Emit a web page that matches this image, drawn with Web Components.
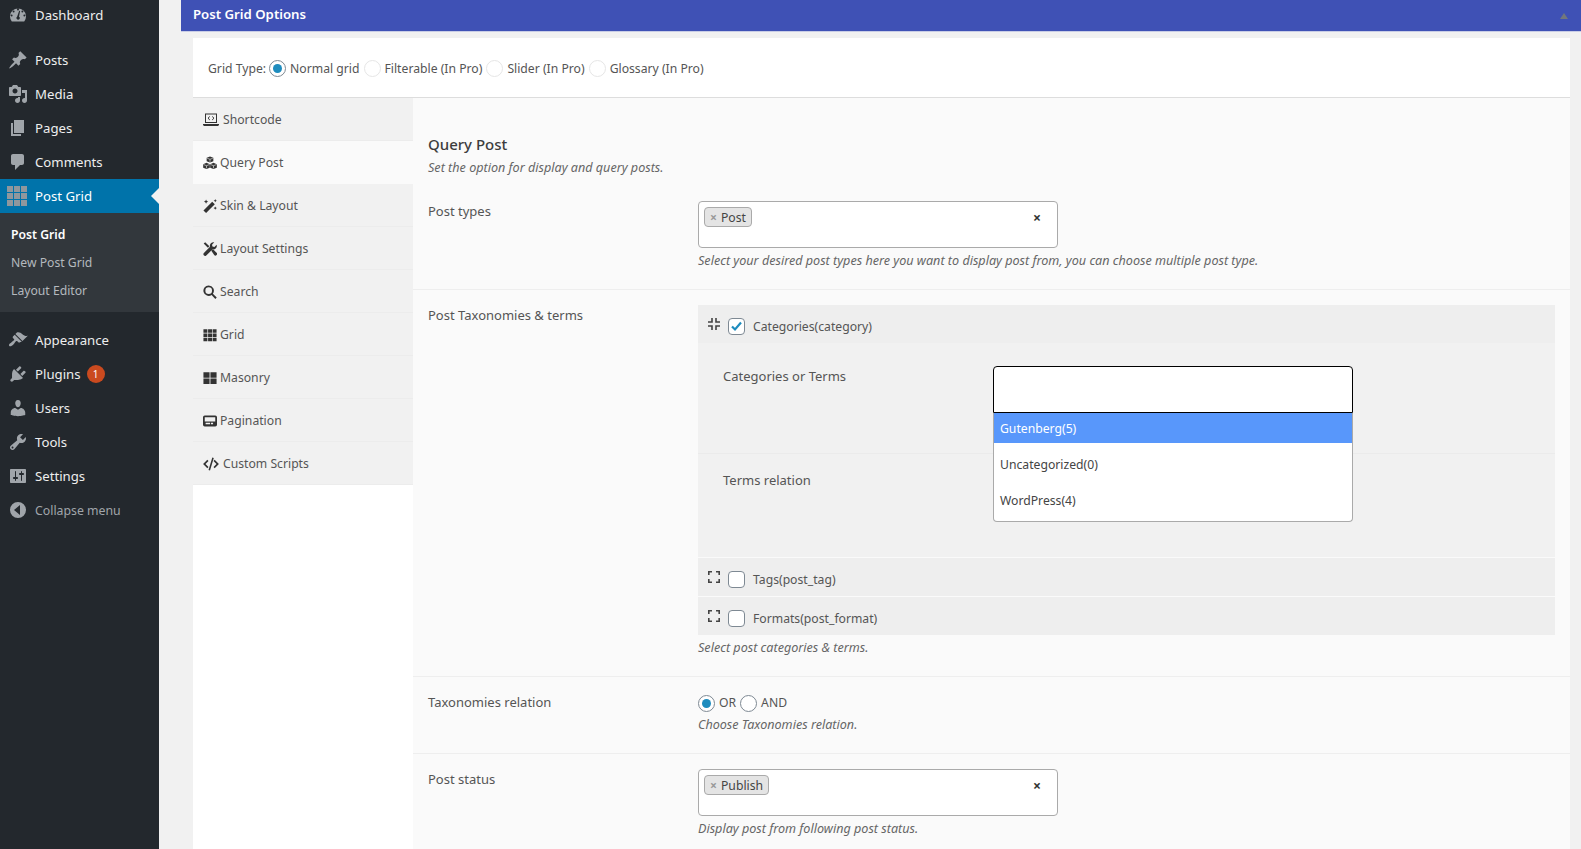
<!DOCTYPE html>
<html>
<head>
<meta charset="utf-8">
<title>Post Grid Options</title>
<style>
  html, body { margin: 0; height: 100%; overflow: hidden; background: #f1f1f1; }
  body { display: flex; font: 13px/20px "Noto Sans", "Open Sans", sans-serif; color: #444; }
</style>
</head>
<body>
<wp-sidebar>
  <wp-menu-item icon="dashboard" style="height:30px">Dashboard</wp-menu-item>
  <wp-menu-item icon="post" style="margin-top:13px">Posts</wp-menu-item>
  <wp-menu-item icon="media">Media</wp-menu-item>
  <wp-menu-item icon="pages">Pages</wp-menu-item>
  <wp-menu-item icon="comments">Comments</wp-menu-item>
  <wp-menu-item icon="grid" current>Post Grid</wp-menu-item>
  <wp-submenu>
    <wp-sub-item active>Post Grid</wp-sub-item>
    <wp-sub-item>New Post Grid</wp-sub-item>
    <wp-sub-item>Layout Editor</wp-sub-item>
  </wp-submenu>
  <wp-menu-item icon="appearance" style="margin-top:11px">Appearance</wp-menu-item>
  <wp-menu-item icon="plugins" badge="1">Plugins</wp-menu-item>
  <wp-menu-item icon="users">Users</wp-menu-item>
  <wp-menu-item icon="tools">Tools</wp-menu-item>
  <wp-menu-item icon="settings">Settings</wp-menu-item>
  <wp-menu-item icon="collapse" dim>Collapse menu</wp-menu-item>
</wp-sidebar>

<pg-metabox title="Post Grid Options">
  <pg-grid-type slot="top">
    <span>Grid Type:</span>
    <pg-radio checked>Normal grid</pg-radio>
    <pg-radio disabled>Filterable (In Pro)</pg-radio>
    <pg-radio disabled>Slider (In Pro)</pg-radio>
    <pg-radio disabled>Glossary (In Pro)</pg-radio>
  </pg-grid-type>

  <pg-tab slot="tabs" icon="laptop">Shortcode</pg-tab>
  <pg-tab slot="tabs" icon="cubes" active>Query Post</pg-tab>
  <pg-tab slot="tabs" icon="magic">Skin &amp; Layout</pg-tab>
  <pg-tab slot="tabs" icon="wrench">Layout Settings</pg-tab>
  <pg-tab slot="tabs" icon="search">Search</pg-tab>
  <pg-tab slot="tabs" icon="th">Grid</pg-tab>
  <pg-tab slot="tabs" icon="large">Masonry</pg-tab>
  <pg-tab slot="tabs" icon="card">Pagination</pg-tab>
  <pg-tab slot="tabs" icon="code">Custom Scripts</pg-tab>

  <pg-section-title hint="Set the option for display and query posts.">Query Post</pg-section-title>

  <pg-field label="Post types" hint="Select your desired post types here you want to display post from, you can choose multiple post type.">
    <pg-tags tag="Post"></pg-tags>
  </pg-field>

  <pg-field label="Post Taxonomies &amp; terms" hint="Select post categories &amp; terms.">
    <pg-term label="Categories(category)" open>
      <pg-subrow label="Categories or Terms" style="height:111px">
        <pg-dropdown>
          <pg-option selected>Gutenberg(5)</pg-option>
          <pg-option>Uncategorized(0)</pg-option>
          <pg-option>WordPress(4)</pg-option>
        </pg-dropdown>
      </pg-subrow>
      <pg-subrow label="Terms relation" style="height:103px"></pg-subrow>
    </pg-term>
    <pg-term label="Tags(post_tag)"></pg-term>
    <pg-term label="Formats(post_format)"></pg-term>
  </pg-field>

  <pg-field label="Taxonomies relation" hint="Choose Taxonomies relation.">
    <div style="display:flex;height:20px;box-sizing:border-box;padding-top:2px;align-items:center">
      <pg-radio checked>OR</pg-radio>
      <pg-radio>AND</pg-radio>
    </div>
  </pg-field>

  <pg-field label="Post status" hint="Display post from following post status.">
    <pg-tags tag="Publish"></pg-tags>
  </pg-field>
</pg-metabox>

<script>
// dashicons-style paths for the admin menu, 20x20
const MENU_ICONS = {
  dashboard: '<path fill-rule="evenodd" d="M3.800 16.500h12.400A8 8 0 1 0 3.800 16.500zM10 3.600a1 1 0 1 1 0 2 1 1 0 0 1 0-2zM5.600 5.400a1 1 0 1 1 0 2 1 1 0 0 1 0-2zM14.400 5.400a1 1 0 1 1 0 2 1 1 0 0 1 0-2zM3.600 9.600a1 1 0 1 1 0 2 1 1 0 0 1 0-2zM16.400 9.600a1 1 0 1 1 0 2 1 1 0 0 1 0-2zM11.200 5.800l.9.3-1.100 5.600a1.600 1.600 0 0 1-.9 3 1.600 1.600 0 0 1-1-2.900z"/>',
  post: '<path d="M10.44 3.02l1.82-1.82 6.36 6.35-1.83 1.82c-1.05-.68-2.48-.57-3.41.36l-.75.75c-.92.93-1.04 2.35-.35 3.41l-1.83 1.82-2.41-2.41-2.8 2.79c-.42.42-3.38 2.71-3.8 2.29s1.86-3.39 2.28-3.81l2.79-2.79L4.1 9.36l1.83-1.82c1.05.69 2.48.57 3.4-.36l.75-.75c.93-.92 1.05-2.35.36-3.41z"/>',
  media: '<path d="M13 11V4c0-.55-.45-1-1-1h-1.67L9 1H5L3.67 3H2c-.55 0-1 .45-1 1v7c0 .55.45 1 1 1h10c.55 0 1-.45 1-1zM7 4.5c1.38 0 2.5 1.12 2.5 2.5S8.38 9.5 7 9.5 4.5 8.38 4.5 7 5.62 4.5 7 4.5zM14 6h5v10.5c0 1.38-1.12 2.5-2.5 2.5S14 17.88 14 16.5s1.12-2.5 2.5-2.5c.17 0 .34.02.5.05V9h-3V6zm-4 8.05V13h2v3.5c0 1.38-1.12 2.5-2.5 2.5S7 17.88 7 16.5 8.12 14 9.5 14c.17 0 .34.02.5.05z"/>',
  pages: '<path d="M6 15V2h10v13H6zm-1 1h8v2H3V5h2v11z"/>',
  comments: '<path d="M5 2h9c1.1 0 2 .9 2 2v7c0 1.1-.9 2-2 2h-2l-5 5v-5H5c-1.1 0-2-.9-2-2V4c0-1.1.9-2 2-2z"/>',
  grid: '<path d="M0 0h6v6H0zM7 0h6v6H7zM14 0h6v6h-6zM0 7h6v6H0zM7 7h6v6H7zM14 7h6v6h-6zM0 14h6v6H0zM7 14h6v6H7zM14 14h6v6h-6z"/>',
  appearance: '<path d="M14.48 11.06L7.41 3.99l1.5-1.5c.5-.56 2.3-.47 3.51.32 1.21.8 1.43 1.28 2.91 2.1 1.18.64 2.45 1.26 4.45.85zm-.71.71L6.7 4.7 4.93 6.47c-.39.39-.39 1.02 0 1.41l1.06 1.06c.39.39.39 1.03 0 1.42-.6.6-1.43 1.11-2.21 1.69-.35.26-.7.53-1.01.84C1.43 13.23.4 15.09 1.3 16s2.74-.13 4.08-1.47c.31-.31.58-.66.84-1.01.58-.78 1.09-1.61 1.69-2.21.39-.39 1.02-.39 1.41 0l1.06 1.06c.39.39 1.02.39 1.41 0z"/>',
  plugins: '<path d="M13.11 4.36L9.87 7.6 8 5.73l3.24-3.24c.35-.34 1.05-.2 1.56.32.52.51.66 1.21.31 1.55zm-8 1.77l.91-1.12 9.01 9.01-1.19.84c-.71.71-2.63 1.16-3.82 1.16H6.14L4.9 17.26c-.59.59-1.54.59-2.12 0-.59-.58-.59-1.53 0-2.12l1.24-1.24v-3.88c0-1.13.4-3.19 1.09-3.89zm7.26 3.97l3.24-3.24c.34-.35 1.04-.21 1.55.31.52.51.66 1.21.31 1.55l-3.24 3.25z"/>',
  users: '<path d="M10 9.25c-2.27 0-2.73-3.44-2.73-3.44C7 4.02 7.82 2 9.97 2c2.16 0 2.98 2.02 2.71 3.81 0 0-.41 3.44-2.68 3.44zm0 2.57L12.72 10c2.39 0 4.52 2.33 4.52 4.53v2.49s-3.65 1.13-7.24 1.13c-3.65 0-7.24-1.13-7.24-1.13v-2.49c0-2.25 1.94-4.48 4.47-4.48z"/>',
  tools: '<path d="M16.68 9.77c-1.34 1.34-3.3 1.67-4.95.99l-5.41 6.52c-.99.99-2.59.99-3.58 0s-.99-2.59 0-3.57l6.52-5.42c-.68-1.65-.35-3.61.99-4.95 1.28-1.28 3.12-1.62 4.72-1.06l-2.89 2.89 2.82 2.82 2.86-2.87c.53 1.58.18 3.39-1.08 4.65zM3.81 16.21c.4.39 1.04.39 1.43 0 .4-.4.4-1.04 0-1.43-.39-.4-1.03-.4-1.43 0-.39.39-.39 1.03 0 1.43z"/>',
  settings: '<path d="M18 16V4c0-.55-.45-1-1-1H3c-.55 0-1 .45-1 1v12c0 .55.45 1 1 1h14c.55 0 1-.45 1-1zM8 11h1c.55 0 1 .45 1 1s-.45 1-1 1H8v1.5c0 .28-.22.5-.5.5s-.5-.22-.5-.5V13H6c-.55 0-1-.45-1-1s.45-1 1-1h1V5.5c0-.28.22-.5.5-.5s.5.22.5.5V11zm5-2h-1c-.55 0-1-.45-1-1s.45-1 1-1h1V5.5c0-.28.22-.5.5-.5s.5.22.5.5V7h1c.55 0 1 .45 1 1s-.45 1-1 1h-1v5.5c0 .28-.22.5-.5.5s-.5-.22-.5-.5V9z"/>',
  collapse: '<path fill-rule="evenodd" d="M18 10a8 8 0 1 0-16 0 8 8 0 0 0 16 0zm-6-5v10l-6-5z"/>'
};

// font-awesome-like tab icons, 16x16
const TAB_ICONS = {
  laptop: '<path fill-rule="evenodd" d="M2 1.500h12v9.500H2zM3 2.500V10h10V2.500zM0 12h16v1l-1 1H1l-1-1z"/><path d="M6.800 4.500L5 6.200l1.800 1.700M9.200 4.500L11 6.200 9.200 7.900" fill="none" stroke="#333"/>',
  cubes: '<path d="M8 .5l3.800 1.500v4L8 7.500 4.200 6V2zM4 7.800l3.800 1.500v4L4 14.800.2 13.300v-4zM12 7.800l3.800 1.500v4L12 14.800l-3.800-1.500v-4z"/><path d="M4.700 2.500L8 3.800l3.300-1.300M8 3.800v3M.7 9.800L4 11.100l3.300-1.300M4 11.100v3M8.700 9.800l3.300 1.300 3.300-1.300M12 11.100v3" fill="none" stroke="#f1f1f1" stroke-width=".7"/>',
  magic: '<path d="M.5 13L10.500 3l3 3L3.500 16zM3.500 .5l.8 1.700 1.700.8-1.700.8-.8 1.700-.8-1.700L1 3l1.700-.8zM14 8.500l.6 1.300 1.300.6-1.300.6-.6 1.300-.6-1.300-1.300-.6 1.300-.6zM14 0l.6 1.300 1.300.6-1.300.6-.6 1.300-.6-1.300-1.300-.6 1.300-.6z"/>',
  wrench: '<path d="M.8 1.800L2.500.3l4.800 4.500-1.700 1.700zM11.500.2a4 4 0 0 1 1.300.2L10.300 3l.5 2.200 2.200.5 2.600-2.500A4 4 0 0 1 11 8.300L4 15.200a1.800 1.800 0 0 1-3-2.500L8 5.300A4 4 0 0 1 11.500.2zM9.500 10l2-1.700 4 3.900a1.900 1.900 0 0 1-2.700 2.700z"/>',
  search: '<path fill-rule="evenodd" d="M6.500.5a6 6 0 0 1 4.800 9.500l4.400 4.300-1.600 1.600-4.300-4.400A6 6 0 1 1 6.500.5zm0 2.200a3.800 3.800 0 1 0 0 7.600 3.800 3.800 0 0 0 0-7.600z"/>',
  th: '<path d="M.5 1.500h4.500v4H.5zM5.800 1.500h4.500v4H5.800zM11 1.500h4.500v4H11zM.5 6.200h4.500v4H.5zM5.800 6.200h4.500v4H5.800zM11 6.200h4.500v4H11zM.5 11h4.500v4H.5zM5.800 11h4.500v4H5.800zM11 11h4.500v4H11z"/>',
  large: '<path d="M.5 1.500h7v6.200h-7zM8.500 1.500h7v6.200h-7zM.5 8.700h7v6.200h-7zM8.500 8.700h7v6.200h-7z"/>',
  card: '<path fill-rule="evenodd" d="M2 1.800h12a2 2 0 0 1 2 2v8.400a2 2 0 0 1-2 2H2a2 2 0 0 1-2-2V3.800a2 2 0 0 1 2-2zM2 3.800v4.700h12V3.800zM3 10v1.800h5V10zM9 10v1.800h2.500V10z"/>',
  code: '<path d="M9.300 1.500l1.500.4-3.800 12.600-1.500-.4zM4.300 3.800l1.200 1.200-3 3 3 3-1.200 1.200L.1 8zM11.700 3.800L15.900 8l-4.200 4.200-1.200-1.200 3-3-3-3z"/>'
};

class WpSidebar extends HTMLElement {
  constructor() {
    super();
    this.attachShadow({ mode: "open" });
    this.shadowRoot.innerHTML = `
      <style>
        :host { display: block; flex: 0 0 159px; height: 100vh; background: #23282d; }
      </style>
      <slot></slot>
    `;
  }
}

class WpMenuItem extends HTMLElement {
  constructor() {
    super();
    this.attachShadow({ mode: "open" });
  }
  connectedCallback() {
    const icon = this.getAttribute("icon");
    const badge = this.getAttribute("badge");
    const isGrid = icon === "grid";
    this.shadowRoot.innerHTML = `
      <style>
        :host { display: flex; align-items: center; height: 34px; box-sizing: border-box; position: relative;
                color: #eee; font-size: 13.200px; }
        :host([current]) { background: #0073aa; color: #fff; }
        :host([current])::after { content: ""; position: absolute; right: 0; top: 50%; margin-top: -8px;
                border: 8px solid transparent; border-right-color: #f1f1f1; border-left-width: 0; }
        :host([dim]) { color: #a0a5aa; font-size: 12.300px; }
        :host([dim]) span { padding-top: 2px; }
        svg { width: 20px; height: 20px; margin: 0 7px 0 8px; fill: #a0a5aa; flex: none; }
        .grid { margin-left: 7px; margin-right: 8px; fill: #8f979d; }
        .badge { display: inline-block; width: 18px; height: 18px; line-height: 18px; border-radius: 50%; text-align: center;
                 margin-left: 6px; background: #ca4a1f; color: #fff; font-size: 10px; }
      </style>
      <svg class="${isGrid ? "grid" : ""}" viewBox="0 0 20 20">${MENU_ICONS[icon]}</svg>
      <span><slot></slot></span>
      ${badge ? `<span class="badge">${badge}</span>` : ""}
    `;
  }
}

class WpSubmenu extends HTMLElement {
  constructor() {
    super();
    this.attachShadow({ mode: "open" });
    this.shadowRoot.innerHTML = `
      <style>
        :host { display: block; background: #32373c; padding: 8px 0 7px; }
      </style>
      <slot></slot>
    `;
  }
}

class WpSubItem extends HTMLElement {
  constructor() {
    super();
    this.attachShadow({ mode: "open" });
    this.shadowRoot.innerHTML = `
      <style>
        :host { display: block; height: 28px; line-height: 28px; padding-left: 11px; color: #b4b9be; font-size: 12.200px; }
        :host([active]) { color: #fff; font-weight: 600; }
      </style>
      <slot></slot>
    `;
  }
}

class PgMetabox extends HTMLElement {
  constructor() {
    super();
    this.attachShadow({ mode: "open" });
  }
  connectedCallback() {
    this.shadowRoot.innerHTML = `
      <style>
        :host { display: block; flex: 1; margin-left: 22px; min-width: 0; }
        .head { height: 31px; background: #3f51b5; border-bottom: 1px solid #c9cde6; box-sizing: content-box;
                display: flex; align-items: center; justify-content: space-between; padding: 0 13px 0 12px; }
        .head h2 { margin: 0 0 4px; color: #fff; font-size: 13.200px; font-weight: 600; line-height: 28px; }
        .arrow { width: 0; height: 0; border: 4px solid transparent; border-top: 0; border-bottom: 6px solid #72777c; }
        .card { margin: 6px 11px 0 12px; background: #fff; }
        .top { height: 59px; border-bottom: 1px solid #ddd; }
        .cols { display: flex; align-items: flex-start; }
        .tabs { flex: 0 0 220px; }
        .panel { flex: 1; min-width: 0; height: 760px; background: #fafafa; }
      </style>
      <div class="head"><h2>${this.getAttribute("title")}</h2><span class="arrow"></span></div>
      <div class="card">
        <div class="top"><slot name="top"></slot></div>
        <div class="cols">
          <div class="tabs"><slot name="tabs"></slot></div>
          <div class="panel"><slot></slot></div>
        </div>
      </div>
    `;
  }
}

class PgGridType extends HTMLElement {
  constructor() {
    super();
    this.attachShadow({ mode: "open" });
    this.shadowRoot.innerHTML = `
      <style>
        :host { display: flex; align-items: center; height: 59px; padding: 1px 0 0 15px; box-sizing: border-box;
                font-size: 12.200px; color: #555; --label-drop: 2px; }
        ::slotted(span) { margin-right: 3px; padding-top: 2px; }
      </style>
      <slot></slot>
    `;
  }
}

class PgRadio extends HTMLElement {
  constructor() {
    super();
    this.attachShadow({ mode: "open" });
    this.shadowRoot.innerHTML = `
      <style>
        :host { display: inline-flex; align-items: center; color: #555; font-size: 12.200px; }
        i { display: block; box-sizing: border-box; width: 17px; height: 17px; border-radius: 50%; background: #fff;
            border: 1px solid #7e8993; margin-right: 4px; position: relative; flex: none; }
        :host([disabled]) i { border-color: #e6e6e6; }
        :host([checked]) i::after { content: ""; position: absolute; left: 3px; top: 3px; width: 9px; height: 9px;
            border-radius: 50%; background: #1e8cbe; }
        span { margin-right: 4px; padding-top: var(--label-drop, 0); }
      </style>
      <i></i><span><slot></slot></span>
    `;
  }
}

class PgTab extends HTMLElement {
  constructor() {
    super();
    this.attachShadow({ mode: "open" });
  }
  connectedCallback() {
    const icon = this.getAttribute("icon");
    const wide = icon === "laptop" || icon === "code";
    this.shadowRoot.innerHTML = `
      <style>
        :host { display: flex; align-items: center; box-sizing: border-box; height: 43px; padding: 2px 0 0 10px;
                background: #f1f1f1; border-bottom: 1px solid #ececec; color: #555; font-size: 12.200px; }
        :host([active]) { background: #fafafa; border-bottom-color: #fafafa; }
        svg { width: ${wide ? 16 : 14}px; height: ${wide ? 16 : 14}px; fill: #333; margin-right: ${wide ? 4 : 3}px; flex: none; }
      </style>
      <svg viewBox="0 0 16 16">${TAB_ICONS[icon]}</svg><span><slot></slot></span>
    `;
  }
}

class PgSectionTitle extends HTMLElement {
  constructor() {
    super();
    this.attachShadow({ mode: "open" });
  }
  connectedCallback() {
    this.shadowRoot.innerHTML = `
      <style>
        :host { display: block; height: 88px; box-sizing: border-box; padding: 35px 15px 0; }
        h3 { margin: 0; font-size: 15px; line-height: 22px; font-weight: 500; color: #3d3d3d; }
        p { margin: 4px 0 0; font-style: italic; font-size: 12.600px; line-height: 18px; color: #666; }
      </style>
      <h3><slot></slot></h3>
      <p>${this.getAttribute("hint")}</p>
    `;
  }
}

class PgField extends HTMLElement {
  constructor() {
    super();
    this.attachShadow({ mode: "open" });
  }
  connectedCallback() {
    this.shadowRoot.innerHTML = `
      <style>
        :host { display: flex; padding: 15px 15px 19px; border-bottom: 1px solid #eee; }
        .label { flex: 0 0 270px; font-size: 13px; color: #555; }
        .val { flex: 1; min-width: 0; }
        p { margin: 4px 0 0; font-style: italic; font-size: 12.600px; line-height: 18px; color: #666; }
      </style>
      <div class="label">${this.getAttribute("label")}</div>
      <div class="val"><slot></slot><p>${this.getAttribute("hint")}</p></div>
    `;
  }
}

class PgTags extends HTMLElement {
  constructor() {
    super();
    this.attachShadow({ mode: "open" });
  }
  connectedCallback() {
    this.shadowRoot.innerHTML = `
      <style>
        :host { display: flex; justify-content: space-between; align-items: flex-start; box-sizing: border-box;
                width: 360px; height: 47px; padding: 5px 16px 0 5px; background: #fff;
                border: 1px solid #aaa; border-radius: 4px; }
        .tag { display: flex; align-items: center; height: 20px; padding: 1px 5px 0; background: #e4e4e4; box-sizing: border-box;
               border: 1px solid #aaa; border-radius: 4px; font-size: 12.200px; color: #444; }
        .tag b { color: #999; font-weight: 700; margin-right: 4px; }
        .clear { font-weight: 700; font-size: 14px; line-height: 22px; color: #333; }
      </style>
      <span class="tag"><b>×</b>${this.getAttribute("tag")}</span>
      <span class="clear">×</span>
    `;
  }
}

class PgTerm extends HTMLElement {
  constructor() {
    super();
    this.attachShadow({ mode: "open" });
  }
  connectedCallback() {
    const open = this.hasAttribute("open");
    // arrows point in when expanded, corners when collapsed
    const toggle = open
      ? '<path d="M4 0v4H0M8 0v4h4M4 12V8H0M8 12V8h4"/>'
      : '<path d="M.8 4V.8h3.200M8 .8h3.200V4M.8 8v3.200h3.200M11.200 8v3.200H8"/>';
    this.shadowRoot.innerHTML = `
      <style>
        :host { display: block; margin-bottom: 1px; }
        :host(:last-child) { margin-bottom: 0; }
        .row { display: flex; height: 38px; background: #eee; font-size: 12.200px; color: #555; }
        .toggle { width: 12px; height: 12px; margin: 13px 8px 0 10px; fill: none; stroke: #444; stroke-width: 1.600; flex: none; }
        .check { box-sizing: border-box; width: 17px; height: 17px; margin: 13px 8px 0 0; border: 1px solid #7e8993;
                 border-radius: 4px; background: #fff; flex: none; }
        .check svg { display: block; }
        .text { line-height: 20px; padding-top: 12px; }
      </style>
      <div class="row">
        <svg class="toggle" viewBox="0 0 12 12">${toggle}</svg>
        <div class="check">${open ? '<svg viewBox="0 0 15 15" width="15" height="15"><path d="M3 7.500l3 3 6-7" fill="none" stroke="#1e8cbe" stroke-width="2.200"/></svg>' : ""}</div>
        <div class="text">${this.getAttribute("label")}</div>
      </div>
      <slot></slot>
    `;
  }
}

class PgSubrow extends HTMLElement {
  constructor() {
    super();
    this.attachShadow({ mode: "open" });
  }
  connectedCallback() {
    this.shadowRoot.innerHTML = `
      <style>
        :host { display: flex; box-sizing: border-box; padding: 23px 0 0 25px; background: #f1f1f1; border-bottom: 1px solid #ebebeb; }
        :host(:last-child) { padding-top: 16px; border-bottom: 0; }
        .label { flex: 0 0 270px; font-size: 13px; color: #555; line-height: 20px; }
      </style>
      <div class="label">${this.getAttribute("label")}</div>
      <slot></slot>
    `;
  }
}

class PgDropdown extends HTMLElement {
  constructor() {
    super();
    this.attachShadow({ mode: "open" });
    this.shadowRoot.innerHTML = `
      <style>
        :host { display: block; position: relative; width: 360px; height: 47px; box-sizing: border-box; z-index: 2; }
        .box { height: 47px; box-sizing: border-box; background: #fff; border: 1px solid #000; border-radius: 4px 4px 0 0; }
        .list { position: absolute; left: 0; right: 0; top: 47px; box-sizing: border-box; background: #fff; padding-bottom: 2px;
                border: 1px solid #aaa; border-top: 0; border-radius: 0 0 4px 4px; }
      </style>
      <div class="box"></div>
      <div class="list"><slot></slot></div>
    `;
  }
}

class PgOption extends HTMLElement {
  constructor() {
    super();
    this.attachShadow({ mode: "open" });
    this.shadowRoot.innerHTML = `
      <style>
        :host { display: block; height: 36px; line-height: 36px; padding-left: 6px; font-size: 12.200px; color: #444; }
        :host([selected]) { height: 30px; line-height: 31px; margin-bottom: 4px; background: #5897fb; color: #fff; }
      </style>
      <slot></slot>
    `;
  }
}

customElements.define("wp-sidebar", WpSidebar);
customElements.define("wp-menu-item", WpMenuItem);
customElements.define("wp-submenu", WpSubmenu);
customElements.define("wp-sub-item", WpSubItem);
customElements.define("pg-metabox", PgMetabox);
customElements.define("pg-grid-type", PgGridType);
customElements.define("pg-radio", PgRadio);
customElements.define("pg-tab", PgTab);
customElements.define("pg-section-title", PgSectionTitle);
customElements.define("pg-field", PgField);
customElements.define("pg-tags", PgTags);
customElements.define("pg-term", PgTerm);
customElements.define("pg-subrow", PgSubrow);
customElements.define("pg-dropdown", PgDropdown);
customElements.define("pg-option", PgOption);
</script>
</body>
</html>
